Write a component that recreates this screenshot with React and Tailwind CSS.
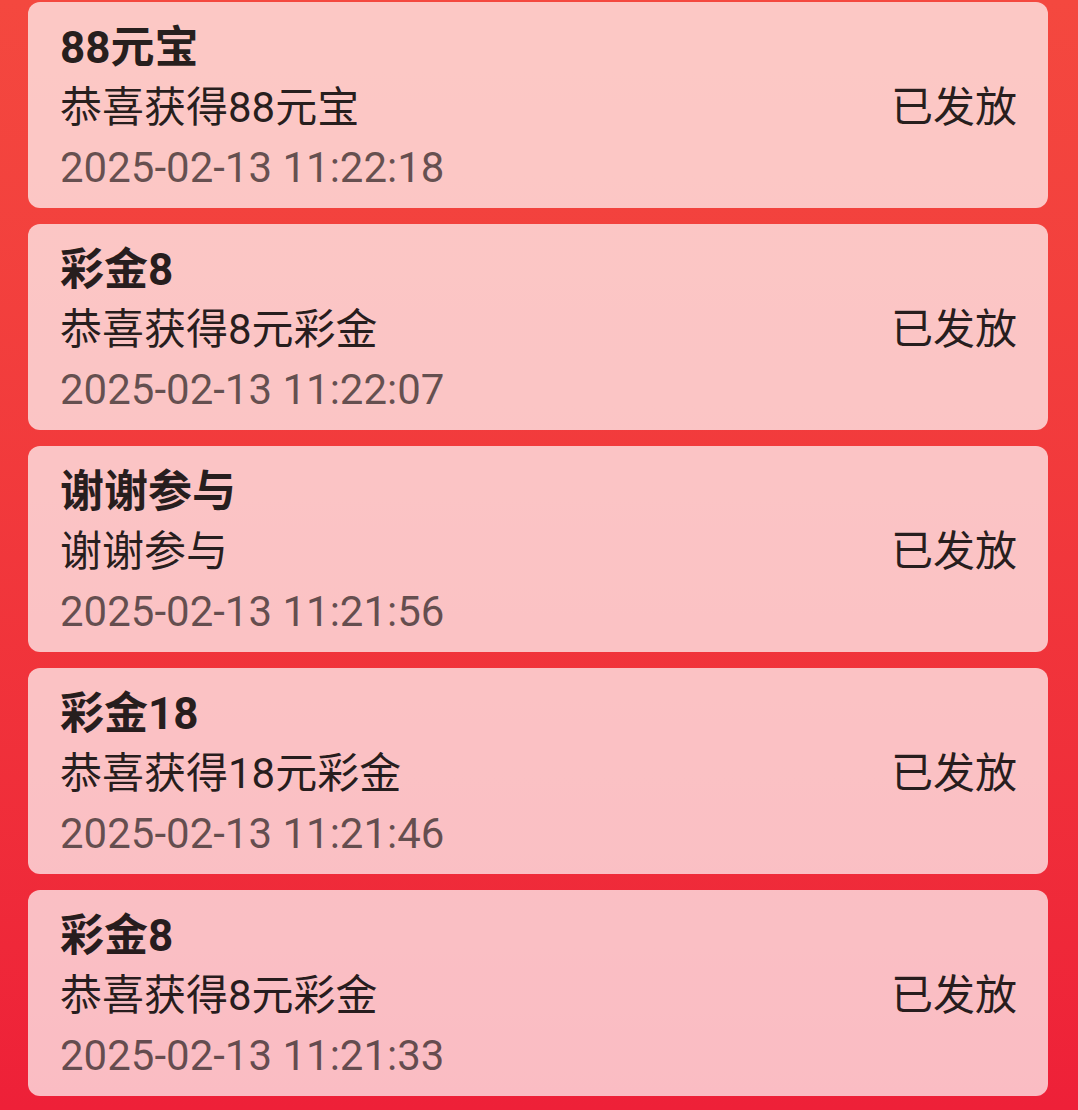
import React from 'react';

const records = [
  { title: '88元宝', desc: '恭喜获得88元宝', time: '2025-02-13 11:22:18' },
  { title: '彩金8', desc: '恭喜获得8元彩金', time: '2025-02-13 11:22:07' },
  { title: '谢谢参与', desc: '谢谢参与', time: '2025-02-13 11:21:56' },
  { title: '彩金18', desc: '恭喜获得18元彩金', time: '2025-02-13 11:21:46' },
  { title: '彩金8', desc: '恭喜获得8元彩金', time: '2025-02-13 11:21:33' },
];

const RecordCard = ({ title, desc, time }) => (
  <div className="flex items-center justify-between rounded-[12px] bg-white/70 pl-[32px] pr-[31px] pt-[16px] pb-[10px]">
    <div className="flex flex-col">
      <div className="h-[60px] text-[44px] font-bold leading-[60px] text-black/85">{title}</div>
      <div className="h-[60px] text-[42px] leading-[60px] text-black/85">{desc}</div>
      <div className="h-[60px] text-[42px] leading-[60px] text-black/60">{time}</div>
    </div>
    <div className="text-[42px] leading-[60px] text-black/85">已发放</div>
  </div>
);

const App = () => {
  return (
    <div
      className="flex min-h-[1110px] flex-col gap-[16px] bg-gradient-to-b from-[#f4483f] to-[#ee2038] pl-[28px] pr-[30px] pt-[2px] pb-[14px]"
      style={{ fontFamily: 'Roboto, "Noto Sans CJK SC", sans-serif' }}
    >
      {records.map((r, i) => (
        <RecordCard key={i} {...r} />
      ))}
    </div>
  );
};

export default App;
